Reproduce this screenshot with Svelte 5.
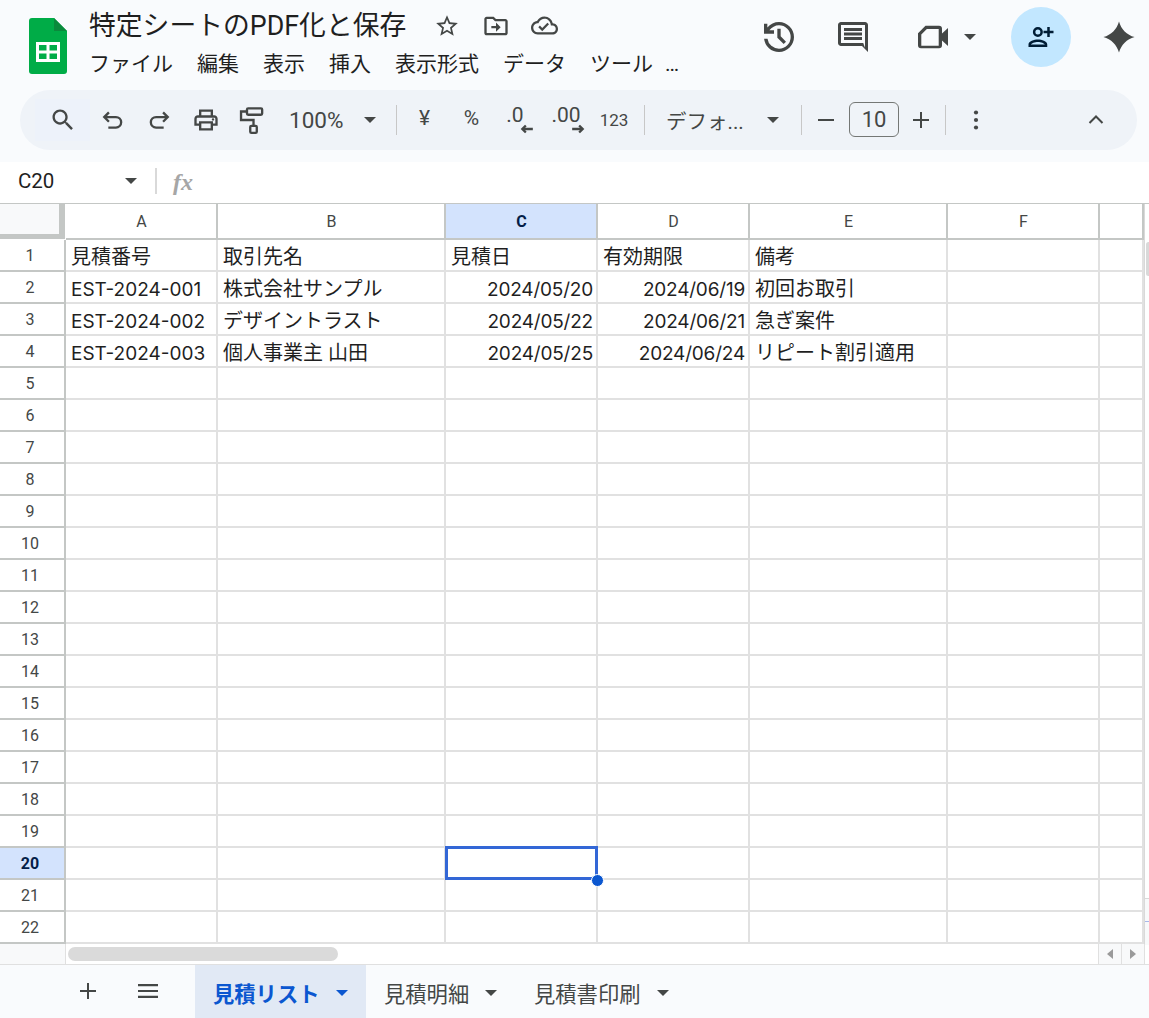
<script lang="ts">
	const menus = ['ファイル', '編集', '表示', '挿入', '表示形式', 'データ', 'ツール', '…'];
	const columns = ['A', 'B', 'C', 'D', 'E', 'F', ''];
	const rows = Array.from({ length: 22 }, (_, i) => i + 1);
	const selectedCol = 'C';
	const selectedRow = 20;

	// cell values keyed by row then column
	const data: Record<number, (string | null)[]> = {
		1: ['見積番号', '取引先名', '見積日', '有効期限', '備考'],
		2: ['EST-2024-001', '株式会社サンプル', '2024/05/20', '2024/06/19', '初回お取引'],
		3: ['EST-2024-002', 'デザイントラスト', '2024/05/22', '2024/06/21', '急ぎ案件'],
		4: ['EST-2024-003', '個人事業主 山田', '2024/05/25', '2024/06/24', 'リピート割引適用']
	};

	const isDate = (v: string | null | undefined) => !!v && /^\d{4}\//.test(v);
	const isLatin = (v: string | null | undefined) => !!v && /^[\x00-\x7f]+$/.test(v);
</script>

<div class="app">
	<header class="top">
		<svg class="logo" viewBox="0 0 38 56" aria-hidden="true">
			<path d="M3 0H25L38 13V53a3 3 0 0 1-3 3H3a3 3 0 0 1-3-3V3a3 3 0 0 1 3-3z" fill="#00ac47" />
			<path d="M25 0L38 13H25z" fill="#0a8a3c" />
			<path d="M7 24H31V44H7zM10 27V32.5H17.5V27zM20.5 27V32.5H28V27zM10 35.5V41H17.5V35.5zM20.5 35.5V41H28V35.5z" fill="#fff" fill-rule="evenodd" />
		</svg>
		<div class="titles">
			<div class="title-row">
				<span class="doc-title">特定シートのPDF化と保存</span>
				<svg class="tico star" viewBox="0 0 24 24"><path d="M22 9.24l-7.19-.62L12 2 9.19 8.63 2 9.24l5.46 4.73L5.82 21 12 17.27 18.18 21l-1.63-7.03L22 9.24zM12 15.4l-3.76 2.27 1-4.28-3.32-2.88 4.38-.38L12 6.1l1.71 4.04 4.38.38-3.32 2.88 1 4.28L12 15.4z" /></svg>
				<svg class="tico move" viewBox="0 0 24 24"><path d="M20 6h-8l-2-2H4c-1.1 0-2 .9-2 2v12c0 1.1.9 2 2 2h16c1.1 0 2-.9 2-2V8c0-1.1-.9-2-2-2zm0 12H4V6h5.17l2 2H20v10zm-8-1v-3H8v-2h4V9l4 4-4 4z" /></svg>
				<svg class="tico cloud" viewBox="0 0 24 24"><path d="M19.35 10.04C18.67 6.59 15.64 4 12 4 9.11 4 6.6 5.64 5.35 8.04 2.34 8.36 0 10.91 0 14c0 3.31 2.69 6 6 6h13c2.76 0 5-2.24 5-5 0-2.64-2.05-4.78-4.65-4.96zM19 18H6c-2.21 0-4-1.79-4-4 0-2.05 1.53-3.76 3.56-3.97l1.07-.11.5-.95C8.08 7.14 9.94 6 12 6c2.62 0 4.88 1.86 5.39 4.43l.3 1.5 1.53.11c1.56.1 2.78 1.41 2.78 2.96 0 1.65-1.35 3-3 3zm-9-3.82l-2.09-2.09L6.5 13.5 10 17l6.01-6.01-1.41-1.41z" /></svg>
			</div>
			<nav class="menus">
				{#each menus as m}
					<span>{m}</span>
				{/each}
			</nav>
		</div>
		<div class="actions">
			<svg class="act history" viewBox="0 0 24 24"><path d="M12 21q-3.450 0-6.012-2.287T3.050 13H5.100q.35 2.600 2.313 4.300T12 19q2.925 0 4.963-2.037T19 12t-2.037-4.963T12 5q-1.725 0-3.225.8T6.250 8H9v2H3V4h2v2.350q1.275-1.600 3.113-2.475T12 3q1.875 0 3.513.713t2.850 1.924 1.924 2.850T21 12t-.713 3.513-1.924 2.850-2.850 1.924T12 21m2.800-4.800L11 12.400V7h2v4.600l3.200 3.200z" /></svg>
			<svg class="act comment" viewBox="0 0 24 24"><path d="M20 2H4c-1.1 0-2 .9-2 2v12c0 1.1.9 2 2 2h14l4 4V4c0-1.1-.9-2-2-2zm0 2v15.170L18.830 16H4V4h16zM6 12h12v2H6zm0-3h12v2H6zm0-3h12v2H6z" /></svg>
			<svg class="act video" viewBox="0 0 24 24"><path d="M7 4.500h9a2 2 0 0 1 2 2v3.200l4-3.700v12l-4-3.700v3.200a2 2 0 0 1-2 2H4a2 2 0 0 1-2-2V9.500zM7.900 6.700L4.200 10.400v7.400h11.600V6.700z" fill-rule="evenodd" /></svg>
			<span class="caret video-caret"></span>
			<div class="share">
				<svg viewBox="0 0 24 24"><path d="M9.500 12a4 4 0 1 0 0-8 4 4 0 0 0 0 8zm0-6a2 2 0 1 1 0 4 2 2 0 0 1 0-4zM9.500 14c-3 0-7.500 1.300-7.500 4v2h15v-2c0-2.700-4.500-4-7.500-4zM4 18c.3-.9 3-2 5.500-2s5.200 1.100 5.500 2zM19 12V9h3V7h-3V4h-2v3h-3v2h3v3z" /></svg>
			</div>
			<svg class="act spark" viewBox="0 0 24 24"><path d="M12 1C13.500 6.500 17.500 10.500 23 12 17.500 13.500 13.500 17.500 12 23 10.500 17.500 6.500 13.500 1 12 6.500 10.500 10.500 6.500 12 1z" /></svg>
		</div>
	</header>

	<div class="toolbar-wrap">
		<div class="toolbar">
			<div class="tool search">
				<svg class="big" viewBox="0 0 24 24"><path d="M15.500 14h-.79l-.28-.27C15.410 12.590 16 11.110 16 9.500 16 5.910 13.090 3 9.500 3S3 5.910 3 9.500 5.910 16 9.500 16c1.610 0 3.090-.59 4.230-1.570l.27.28v.79l5 4.990L20.490 19l-4.990-5zm-6 0C7.010 14 5 11.990 5 9.500S7.010 5 9.500 5 14 7.010 14 9.500 11.990 14 9.500 14z" /></svg>
			</div>
			<div class="tool w46"><svg class="big" viewBox="0 0 24 24"><path class="line" d="M8.500 5.500L4.500 9.500l4 4M4.500 9.500h10a4.500 4.500 0 0 1 0 9H8" /></svg></div>
			<div class="tool w46"><svg class="big" viewBox="0 0 24 24"><path class="line" d="M15.500 5.500l4 4-4 4M19.500 9.500h-10a4.500 4.500 0 0 0 0 9H16" /></svg></div>
			<div class="tool w47"><svg class="big" viewBox="0 0 24 24"><path d="M19 8h-1V3H6v5H5c-1.660 0-3 1.340-3 3v6h4v4h12v-4h4v-6c0-1.660-1.340-3-3-3zM8 5h8v3H8V5zm8 14H8v-4h8v4zm4-4h-2v-2H6v2H4v-4c0-.55.45-1 1-1h14c.55 0 1 .45 1 1v4z" /><circle cx="18" cy="11.500" r="1" /></svg></div>
			<div class="tool w46"><svg class="big" viewBox="0 0 24 24"><rect class="line" x="7.700" y="2" width="13" height="5.500" rx="1" /><path class="line" d="M7.700 4.700H2.600V12H13.300V17" /><rect class="line" x="10.500" y="17" width="5.600" height="6" rx="1" /></svg></div>
			<div class="zoom">100%</div>
			<span class="caret zoom-caret"></span>
			<span class="sep s1"></span>
			<div class="tool fmt yen">¥</div>
			<div class="tool fmt pct">%</div>
			<div class="tool dec">
				<span>.0</span>
				<svg viewBox="0 0 12 10"><path class="line" d="M11 5H2M5 2L2 5l3 3" /></svg>
			</div>
			<div class="tool dec dec2">
				<span>.00</span>
				<svg viewBox="0 0 12 10"><path class="line" d="M1 5h9M7 2l3 3-3 3" /></svg>
			</div>
			<div class="tool num">123</div>
			<span class="sep s2"></span>
			<div class="font-name">デフォ...</div>
			<span class="caret font-caret"></span>
			<span class="sep s3"></span>
			<div class="tool w47"><svg viewBox="0 0 24 24"><path d="M4 11h16v2H4z" /></svg></div>
			<div class="size-box">10</div>
			<div class="tool w44"><svg viewBox="0 0 24 24"><path d="M11 4h2v7h7v2h-7v7h-2v-7H4v-2h7z" /></svg></div>
			<span class="sep s4"></span>
			<div class="tool w60"><svg viewBox="0 0 24 24"><circle cx="12" cy="4.500" r="2.100" /><circle cx="12" cy="12" r="2.100" /><circle cx="12" cy="19.500" r="2.100" /></svg></div>
			<div class="chevron"><svg viewBox="0 0 24 24"><path class="line" d="M5.500 15L12 8.500 18.500 15" /></svg></div>
		</div>
	</div>

	<div class="formula">
		<span class="cell-ref">C20</span>
		<span class="caret ref-caret"></span>
		<span class="fsep"></span>
		<span class="fx">fx</span>
	</div>

	<div class="sheet">
		<div class="corner"></div>
		{#each columns as c}
			<div class="col-head" class:selected={c === selectedCol}>{c}</div>
		{/each}
		{#each rows as r}
			<div class="row-head" class:selected={r === selectedRow}>{r}</div>
			{#each columns as c, ci}
				{@const value = data[r]?.[ci]}
				<div class="cell" class:right={isDate(value)} class:latin={isLatin(value)} class:narrow={c === ''}>
					{#if value}{value}{/if}
					{#if c === selectedCol && r === selectedRow}
						<span class="active"></span>
						<span class="handle"></span>
					{/if}
				</div>
			{/each}
		{/each}
		<div class="vscroll">
			<span class="vthumb"></span>
			<span class="vmark m1"></span>
			<span class="vmark m2"></span>
		</div>
	</div>

	<div class="hscroll">
		<div class="hs-head"></div>
		<div class="hs-track"><span class="hs-thumb"></span></div>
		<div class="hs-btn"><span class="tri left"></span></div>
		<div class="hs-btn"><span class="tri rightward"></span></div>
		<div class="hs-end"></div>
	</div>

	<footer class="tabs">
		<svg class="add" viewBox="0 0 24 24"><path d="M11 4h2v7h7v2h-7v7h-2v-7H4v-2h7z" /></svg>
		<svg class="all" viewBox="0 0 24 24"><path d="M2 5h20v2.200H2zM2 10.900h20v2.200H2zM2 16.800h20v2.200H2z" /></svg>
		<div class="tab active-tab">見積リスト<span class="caret"></span></div>
		<div class="tab t2">見積明細<span class="caret"></span></div>
		<div class="tab t3">見積書印刷<span class="caret"></span></div>
	</footer>
</div>

<style>
	:global(body) {
		margin: 0;
		background: #fff;
		overflow: hidden;
	}

	.app {
		width: 1149px;
		height: 1018px;
		overflow: hidden;
		display: flex;
		flex-direction: column;
		font-family: Roboto, 'Noto Sans CJK JP', sans-serif;
		color: #1f1f1f;
	}

	.top {
		height: 90px;
		box-sizing: border-box;
		background: #f9fbfd;
		display: flex;
		padding-left: 29px;
		flex: none;
	}

	.logo {
		width: 38px;
		height: 56px;
		margin-top: 18px;
		flex: none;
	}

	.titles {
		margin-left: 22px;
		width: 650px;
		flex: none;
	}

	.title-row {
		display: flex;
		align-items: center;
		height: 51px;
	}

	.doc-title {
		font-size: 26.800px;
		color: #1f1f1f;
		white-space: nowrap;
		line-height: 50px;
	}

	.tico {
		width: 24px;
		height: 24px;
		fill: #444746;
		flex: none;
	}

	.star {
		margin-left: 28px;
		width: 26px;
		height: 26px;
	}

	.move {
		margin-left: 22px;
		width: 28px;
		height: 28px;
	}

	.cloud {
		margin-left: 21px;
		width: 27px;
		height: 27px;
	}

	.menus {
		display: flex;
		gap: 24px;
		font-size: 21px;
		line-height: 26px;
		height: 26px;
		white-space: nowrap;
	}

	.menus span:last-child {
		margin-left: -12px;
	}

	.actions {
		display: flex;
		align-items: center;
		height: 74px;
		flex: 1;
		position: relative;
	}

	.act {
		fill: #444746;
		flex: none;
	}

	.history {
		width: 40px;
		height: 40px;
		margin-left: 20px;
	}

	.comment {
		width: 36px;
		height: 36px;
		margin-left: 36px;
	}

	.video {
		width: 36px;
		height: 36px;
		margin-left: 44px;
	}

	.caret {
		display: inline-block;
		width: 0;
		height: 0;
		border-left: 6px solid transparent;
		border-right: 6px solid transparent;
		border-top: 6px solid #444746;
		flex: none;
	}

	.video-caret {
		margin-left: 13px;
	}

	.share {
		width: 60px;
		height: 60px;
		border-radius: 50%;
		background: #c2e7ff;
		display: flex;
		align-items: center;
		justify-content: center;
		margin-left: 35px;
		flex: none;
	}

	.share svg {
		width: 30px;
		height: 30px;
		fill: #001d35;
	}

	.spark {
		width: 34px;
		height: 34px;
		margin-left: 31px;
	}

	.toolbar-wrap {
		height: 72px;
		background: #f9fbfd;
		padding: 0 12px 12px 20px;
		box-sizing: border-box;
		flex: none;
	}

	.toolbar {
		width: 1117px;
		height: 60px;
		border-radius: 30px;
		background: #eff3f8;
		display: flex;
		align-items: center;
		padding-left: 15px;
		box-sizing: border-box;
		color: #444746;
	}

	.tool {
		height: 42px;
		display: flex;
		align-items: center;
		justify-content: center;
		flex: none;
	}

	.tool svg {
		width: 24px;
		height: 24px;
		fill: #444746;
	}

	.tool svg.big {
		width: 28px;
		height: 28px;
	}

	.line {
		fill: none;
		stroke: #444746;
		stroke-width: 2;
	}

	.search {
		width: 55px;
		background: #edf2fa;
	}

	.w46 {
		width: 46px;
	}

	.w47 {
		width: 47px;
	}

	.w44 {
		width: 44px;
	}

	.w60 {
		width: 60px;
	}

	.zoom {
		font-size: 22.500px;
		width: 70px;
		padding-left: 14px;
		box-sizing: border-box;
		flex: none;
	}

	.zoom-caret {
		margin-left: 19px;
	}

	.sep {
		width: 1px;
		height: 30px;
		background: #c7c7c7;
		flex: none;
	}

	.s1 {
		margin-left: 20px;
	}

	.fmt {
		font-size: 21px;
		width: 47px;
		padding-bottom: 5px;
		box-sizing: border-box;
	}

	.yen {
		margin-left: 4px;
	}

	.dec {
		width: 48px;
		position: relative;
		font-size: 21px;
	}

	.dec span {
		margin-bottom: 11px;
		margin-left: -8px;
	}

	.dec svg {
		position: absolute;
		width: 14px;
		height: 12px;
		right: 9px;
		bottom: 6px;
	}

	.dec2 span {
		margin-left: -2px;
	}

	.dec2 svg {
		right: 6px;
	}

	.num {
		width: 48px;
		font-size: 17px;
		padding-right: 2px;
		box-sizing: border-box;
	}

	.s2 {
		margin-left: 5px;
	}

	.font-name {
		font-size: 20.500px;
		width: 84px;
		margin-left: 21px;
		white-space: nowrap;
		flex: none;
	}

	.font-caret {
		margin-left: 17px;
	}

	.s3 {
		margin-left: 22px;
	}

	.size-box {
		width: 50px;
		height: 35px;
		box-sizing: border-box;
		border: 1px solid #747775;
		border-radius: 6px;
		display: flex;
		align-items: center;
		justify-content: center;
		font-size: 22px;
		flex: none;
		margin-bottom: 2px;
	}

	.s4 {
		margin-left: 2px;
	}

	.chevron {
		margin-left: 60px;
		width: 60px;
		display: flex;
		justify-content: center;
	}

	.chevron svg {
		width: 24px;
		height: 24px;
	}

	.formula {
		height: 41px;
		background: #fff;
		display: flex;
		align-items: center;
		flex: none;
		box-sizing: border-box;
		padding-bottom: 3px;
	}

	.cell-ref {
		font-size: 20.500px;
		margin-left: 18px;
		width: 107px;
		color: #1f1f1f;
	}

	.ref-caret {
		margin-right: 18px;
	}

	.fsep {
		width: 2px;
		height: 26px;
		background: #d9d9d9;
	}

	.fx {
		font-family: 'Liberation Serif', serif;
		font-style: italic;
		font-weight: 700;
		font-size: 24px;
		color: #a6a6a6;
		margin-left: 16px;
		margin-top: 3px;
	}

	.sheet {
		display: grid;
		grid-template-columns: 66px 152px 228px 152px 152px 198px 152px 44px 5px;
		grid-template-rows: 36px repeat(22, 32px);
		height: 740px;
		flex: none;
		border-top: 1px solid #c4c7c5;
		box-sizing: border-box;
		position: relative;
	}

	.corner {
		background: #f8f9fa;
		border-right: 6px solid #c4c7c5;
		border-bottom: 5px solid #c4c7c5;
		margin-right: 1px;
		box-sizing: border-box;
		height: 35px;
	}

	.col-head {
		display: flex;
		align-items: center;
		justify-content: center;
		font-size: 16px;
		color: #444746;
		border-right: 2px solid #c4c7c5;
		border-bottom: 2px solid #c4c7c5;
		box-sizing: border-box;
		padding-left: 1px;
	}

	.col-head.selected {
		background: #d3e3fd;
		color: #041e49;
		font-weight: 700;
	}

	.row-head {
		display: flex;
		align-items: center;
		justify-content: center;
		font-size: 16px;
		color: #444746;
		border-right: 2px solid #c4c7c5;
		border-bottom: 2px solid #c4c7c5;
		box-sizing: border-box;
		padding-right: 4px;
	}

	.row-head.selected {
		background: #d3e3fd;
		color: #041e49;
		font-weight: 700;
	}

	.cell {
		border-right: 2px solid #e1e1e1;
		border-bottom: 2px solid #e1e1e1;
		box-sizing: border-box;
		font-size: 20px;
		line-height: 30px;
		padding: 2px 3px 0 5px;
		white-space: nowrap;
		color: #1f1f1f;
		position: relative;
	}

	.cell.latin {
		font-family: Inter, Roboto, sans-serif;
		font-size: 19px;
		padding-top: 3px;
	}

	.cell.right {
		text-align: right;
		letter-spacing: -0.2px;
	}

	.cell.narrow {
		padding: 0;
	}

	.active {
		position: absolute;
		left: -1px;
		top: -2px;
		width: 153px;
		height: 34px;
		box-sizing: border-box;
		border: 3px solid #3367d6;
		z-index: 2;
	}

	.handle {
		position: absolute;
		left: 145px;
		top: 26px;
		width: 13px;
		height: 13px;
		border-radius: 50%;
		background: #0b57d0;
		border: 1px solid #fff;
		box-sizing: border-box;
		z-index: 3;
	}

	.vscroll {
		grid-column: 9;
		grid-row: 1 / span 23;
		position: relative;
		border-left: 1px solid #d9d9d9;
		box-sizing: border-box;
		background: #fff;
	}

	.vthumb {
		position: absolute;
		left: 1px;
		top: 38px;
		width: 5px;
		height: 34px;
		border-radius: 3px;
		background: #d9d9d9;
	}

	.vmark {
		position: absolute;
		left: 0;
		width: 5px;
		height: 23px;
		background: #f8f9fa;
		border-top: 1px solid #d9d9d9;
	}

	.m1 {
		top: 694px;
	}

	.m2 {
		top: 717px;
		border-top-color: #a8b8e8;
	}

	.hscroll {
		height: 21px;
		display: flex;
		flex: none;
		background: #fff;
		border-top: 1px solid #e0e0e0;
		box-sizing: border-box;
	}

	.hs-head {
		width: 66px;
		background: #f8f9fa;
		border-right: 1px solid #e0e0e0;
		box-sizing: border-box;
	}

	.hs-track {
		width: 1032px;
		padding: 3px 0 0 2px;
		box-sizing: border-box;
	}

	.hs-thumb {
		display: block;
		width: 270px;
		height: 14px;
		border-radius: 7px;
		background: #dadada;
	}

	.hs-btn {
		width: 23px;
		background: #f8f9fa;
		border-left: 1px solid #e0e0e0;
		box-sizing: border-box;
		display: flex;
		align-items: center;
		justify-content: center;
	}

	.tri {
		width: 0;
		height: 0;
		border-top: 5px solid transparent;
		border-bottom: 5px solid transparent;
	}

	.tri.left {
		border-right: 6px solid #9a9a9a;
	}

	.tri.rightward {
		border-left: 6px solid #9a9a9a;
	}

	.hs-end {
		flex: 1;
		border-left: 1px solid #e0e0e0;
	}

	.tabs {
		flex: 1;
		background: #f9fbfd;
		border-top: 1px solid #e0e0e0;
		display: flex;
		align-items: stretch;
		box-sizing: border-box;
	}

	.add,
	.all {
		width: 24px;
		height: 24px;
		fill: #444746;
		flex: none;
		align-self: center;
		margin-top: -2px;
	}

	.add {
		margin-left: 76px;
	}

	.all {
		margin-left: 36px;
		margin-right: 35px;
	}

	.tab {
		display: flex;
		align-items: center;
		font-size: 21.300px;
		color: #444746;
		white-space: nowrap;
		flex: none;
		padding-top: 2px;
		box-sizing: border-box;
	}

	.tab .caret {
		margin-left: 16px;
	}

	.active-tab {
		background: #e1e9f5;
		color: #0b57d0;
		font-weight: 700;
		width: 171px;
		padding-left: 18px;
	}

	.active-tab .caret {
		border-top-color: #0b57d0;
	}

	.t2 {
		width: 168px;
		padding-left: 18px;
	}
</style>
